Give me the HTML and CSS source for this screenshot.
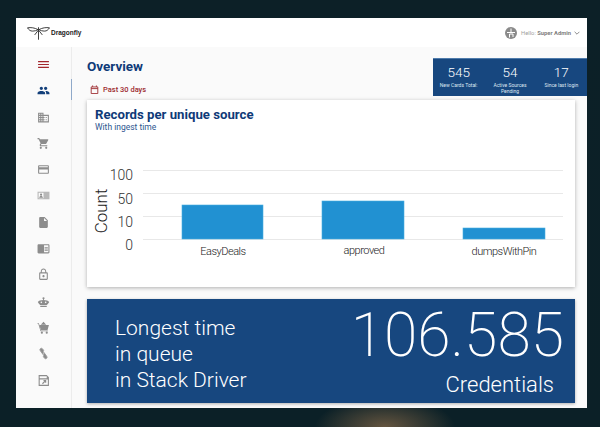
FILE: index.html
```html
<!DOCTYPE html>
<html lang="en">
<head>
  <meta charset="UTF-8" />
  <meta name="viewport" content="width=device-width, initial-scale=1.0"/>
  <title>Dragonfly</title>
  <link rel="stylesheet" href="styles.css">
</head>
<body>
  <div class="window">
    <div class="header">
      <div class="logo">
        <svg class="logo-mark" viewBox="0 0 24 14" fill="none" stroke="#222" stroke-width="0.9">
          <path d="M12 1v13"/>
          <path d="M11.500 3.500C8 1.500 4 1 .5 1.600c1.500 2.200 3 3.400 5 3.400 2.400 0 4.600-.6 6-1.500z"/>
          <path d="M12.500 3.500c3.500-2 7.500-2.500 11-1.900-1.500 2.200-3 3.400-5 3.400-2.400 0-4.600-.6-6-1.500z"/>
          <path d="M11.500 4.500 8 9M12.500 4.500 16 9"/>
        </svg>
        <span class="logo-name">Dragonfly</span>
      </div>
      <div class="user">
        <svg class="avatar" viewBox="0 0 24 24">
          <circle cx="12" cy="12" r="12" fill="#8a8a8a"/>
          <path d="M12 3v8M4 11h16M9 21v-7h7v6" fill="none" stroke="#fff" stroke-width="2"/>
        </svg>
        <span class="hello">Hello: <strong>Super Admin</strong></span>
        <svg class="chevron" viewBox="0 0 10 6"><path d="M1 1l4 4 4-4" fill="none" stroke="#777" stroke-width="1.400"/></svg>
      </div>
    </div>

    <div class="content">
      <div class="sidebar">
        <svg class="nav-icon menu" viewBox="0 0 24 24"><path d="M2 18.500h20v-2.200H2v2.200zm0-5.400h20v-2.200H2v2.200zM2 5.500v2.200h20V5.500H2z"/></svg>
        <svg class="nav-icon active" viewBox="0 0 24 24"><path d="M16 11c1.660 0 2.990-1.340 2.990-3S17.660 5 16 5c-1.660 0-3 1.340-3 3s1.340 3 3 3zm-8 0c1.660 0 2.990-1.340 2.990-3S9.660 5 8 5C6.340 5 5 6.340 5 8s1.340 3 3 3zm0 2c-2.330 0-7 1.170-7 3.500V19h14v-2.500c0-2.330-4.670-3.500-7-3.500zm8 0c-.29 0-.62.02-.97.05 1.160.84 1.970 1.970 1.970 3.450V19h6v-2.500c0-2.330-4.670-3.500-7-3.500z"/></svg>
        <svg class="nav-icon" viewBox="0 0 24 24"><path d="M12 7V3H2v18h20V7H12zM6 19H4v-2h2v2zm0-4H4v-2h2v2zm0-4H4V9h2v2zm0-4H4V5h2v2zm4 12H8v-2h2v2zm0-4H8v-2h2v2zm0-4H8V9h2v2zm0-4H8V5h2v2zm10 12h-8v-2h2v-2h-2v-2h2v-2h-2V9h8v10zm-2-8h-2v2h2v-2zm0 4h-2v2h2v-2z"/></svg>
        <svg class="nav-icon" viewBox="0 0 24 24"><path d="M7 18c-1.100 0-1.990.9-1.990 2S5.900 22 7 22s2-.9 2-2-.9-2-2-2zM1 2v2h2l3.600 7.590-1.350 2.450c-.16.28-.25.61-.25.96 0 1.100.9 2 2 2h12v-2H7.420c-.14 0-.25-.11-.25-.25l.03-.12.9-1.630h7.450c.75 0 1.410-.41 1.750-1.030l3.580-6.490c.08-.14.12-.31.12-.48 0-.55-.45-1-1-1H5.210l-.94-2H1zm16 16c-1.100 0-1.990.9-1.990 2s.89 2 1.990 2 2-.9 2-2-.9-2-2-2z"/></svg>
        <svg class="nav-icon" viewBox="0 0 24 24"><path d="M20 4H4c-1.110 0-1.990.89-1.990 2L2 18c0 1.110.89 2 2 2h16c1.110 0 2-.89 2-2V6c0-1.110-.89-2-2-2zm0 14H4v-6h16v6zm0-10H4V6h16v2z"/></svg>
        <svg class="nav-icon" viewBox="0 0 24 24"><path d="M1 5h22v14H1z" opacity=".6"/><path d="M3 7h9v10H3z" fill="#fafafa"/><circle cx="7.500" cy="10.500" r="2"/><path d="M4 16c0-2 2-3 3.500-3s3.500 1 3.500 3z"/></svg>
        <svg class="nav-icon" viewBox="0 0 24 24"><path d="M6 2c-1.100 0-1.990.9-1.990 2L4 20c0 1.100.89 2 1.990 2H18c1.100 0 2-.9 2-2V8l-6-6H6zm7 7V3.500L18.500 9H13z"/></svg>
        <svg class="nav-icon" viewBox="0 0 24 24"><path d="M21 4H3c-1.100 0-2 .9-2 2v13c0 1.100.9 2 2 2h18c1.100 0 2-.9 2-2V6c0-1.100-.9-2-2-2zm0 15h-8V6h8v13zm-7-9.500h6V11h-6zm0 2.500h6v1.500h-6zm0 2.500h6V16h-6z"/></svg>
        <svg class="nav-icon" viewBox="0 0 24 24"><path d="M12 17c1.100 0 2-.9 2-2s-.9-2-2-2-2 .9-2 2 .9 2 2 2zm6-9h-1V6c0-2.760-2.240-5-5-5S7 3.240 7 6v2H6c-1.100 0-2 .9-2 2v10c0 1.100.9 2 2 2h12c1.100 0 2-.9 2-2V10c0-1.100-.9-2-2-2zM8.900 6c0-1.710 1.390-3.100 3.100-3.100s3.100 1.390 3.100 3.100v2H8.900V6zM18 20H6V10h12v10z"/></svg>
        <svg class="nav-icon" viewBox="0 0 24 24"><path d="M12 9c-5 0-9.500 1.500-10.500 4 1 3 4 5 5 6h11c1-1 4-3 5-6-1-2.500-5.500-4-10.500-4zM6 20.500h12V22H6z"/><path d="M10 6a2 2 0 1 0 4 0 2 2 0 1 0-4 0z"/><path d="M11.200 7.500h1.600V9.500h-1.600z"/><circle cx="8" cy="13.500" r="1.500" fill="#fafafa"/><circle cx="16" cy="13.500" r="1.500" fill="#fafafa"/></svg>
        <svg class="nav-icon" viewBox="0 0 24 24"><path d="M12 1.500 7 7h10zM4 7.500h18l-2.500 9H7.500z"/><path d="M1 4h2.500l4 13.500H20v1.500H6.500L2.500 5.500H1z"/><circle cx="9" cy="21.500" r="2"/><circle cx="18" cy="21.500" r="2"/></svg>
        <svg class="nav-icon" viewBox="0 0 24 24" fill="none" stroke="#9c9c9c" stroke-width="1.800"><path d="M12.500 6.500 10 3.300a2.600 2.600 0 0 0-4.200 3l5.600 8"/><path d="M11.500 17.500l2.500 3.200a2.600 2.600 0 0 0 4.200-3l-5.600-8"/></svg>
        <svg class="nav-icon" viewBox="0 0 24 24"><path d="M3 2h15l4 4v16H3zM5 4v4h13V4zM5 10v10h15V10z" fill-rule="evenodd"/><path d="M10 18l6-6M12 12h4v4" fill="none" stroke="#8c8c8c" stroke-width="2"/></svg>
      </div>

      <div class="main">
        <div class="top-row">
          <div class="title-block">
            <h1>Overview</h1>
            <div class="period">
              <svg class="calendar" viewBox="0 0 12 12" fill="none" stroke="#9d2b30" stroke-width="1.200"><path d="M1.600 2.600h8.800v8.800H1.600zM1.600 4.800h8.800M3.500.6v2M8.500.6v2"/></svg>
              Past 30 days
            </div>
          </div>
          <div class="stats">
            <div class="stat"><span class="stat-value">545</span><span class="stat-label">New Cards Total:</span></div>
            <div class="stat"><span class="stat-value">54</span><span class="stat-label">Active Sources Pending</span></div>
            <div class="stat"><span class="stat-value">17</span><span class="stat-label">Since last login</span></div>
          </div>
        </div>

        <div class="card">
          <h2>Records per unique source</h2>
          <div class="subtitle">With ingest time</div>
          <svg class="chart" viewBox="0 0 488 140">
            <g class="grid">
              <path d="M56 28.500h420M56 51.500h420M56 74.500h420M56 97.500h420"/>
            </g>
            <g class="bars">
              <rect x="95" y="63" width="81" height="34"/>
              <rect x="235" y="59" width="82" height="38"/>
              <rect x="376" y="86" width="82" height="11"/>
            </g>
            <g class="ticks">
              <text x="46" y="38">100</text>
              <text x="46" y="61.500">50</text>
              <text x="46" y="84.500">10</text>
              <text x="46" y="107.500">0</text>
            </g>
            <text class="axis-title" transform="translate(20 69) rotate(-90)">Count</text>
            <g class="labels">
              <text x="136" y="112.500">EasyDeals</text>
              <text x="277" y="111.500">approved</text>
              <text x="417" y="112.500">dumpsWithPin</text>
            </g>
          </svg>
        </div>

        <div class="banner">
          <div class="banner-title">Longest time<br>in queue<br>in Stack Driver</div>
          <div class="banner-figure">
            <div class="banner-number">106.585</div>
            <div class="banner-unit">Credentials</div>
          </div>
        </div>
      </div>
    </div>
  </div>
</body>
</html>
```

FILE: styles.css
```css
* {
  box-sizing: border-box;
}

html, body {
  height: 100%;
}

body {
  margin: 0;
  overflow: hidden;
  font-family: Roboto, 'Liberation Sans', sans-serif;
  background:
    radial-gradient(ellipse 70px 30px at 385px 427px, #65553f, rgba(101,85,63,0) 100%),
    linear-gradient(to bottom, #0c2027, #0b2027);
  padding: 18px 13px 19px 16px;
}

.window {
  height: 100%;
  display: flex;
  flex-direction: column;
  background-color: #fafafa;
}

.header {
  height: 29px;
  flex-shrink: 0;
  background-color: white;
  display: flex;
  align-items: center;
  justify-content: space-between;
  padding: 0 7px 0 11px;
}

.logo {
  display: flex;
  align-items: center;
  gap: 1px;
}

.logo-mark {
  width: 23px;
  height: 14px;
}

.logo-name {
  font-family: 'Liberation Sans', sans-serif;
  font-size: 6.500px;
  font-weight: bold;
  color: #222;
}

.user {
  display: flex;
  align-items: center;
}

.avatar {
  width: 12px;
  height: 12px;
  margin-right: 4px;
}

.hello {
  font-size: 5.800px;
  color: #a0a0a0;
  margin-right: 3px;
}

.hello strong {
  color: #808080;
}

.chevron {
  width: 6px;
  height: 4px;
}

.content {
  flex: 1;
  display: flex;
  min-height: 0;
}

.sidebar {
  width: 56px;
  flex-shrink: 0;
  border-right: 1px solid #ececec;
  display: flex;
  flex-direction: column;
  align-items: center;
  padding-top: 11px;
  gap: 13.300px;
}

.nav-icon {
  width: 13px;
  height: 13px;
  fill: #8c8c8c;
}

.menu {
  fill: #a3262c;
}

.active {
  fill: #123f7a;
}

.main {
  flex: 1;
  display: flex;
  flex-direction: column;
  min-width: 0;
  padding-top: 11px;
}

.top-row {
  height: 38px;
  flex-shrink: 0;
  display: flex;
  justify-content: space-between;
  position: relative;
}

.top-row::before {
  content: "";
  position: absolute;
  left: -1px;
  top: 21px;
  height: 21px;
  width: 1px;
  background-color: #8fa9c9;
}

.title-block {
  padding-left: 15px;
}

h1 {
  margin: 0;
  font-size: 13.500px;
  line-height: 16px;
  font-weight: bold;
  color: #0f3a78;
}

.period {
  margin-top: 11px;
  display: flex;
  align-items: center;
  gap: 4px;
  font-size: 7.500px;
  font-weight: 500;
  color: #9d2b30;
  padding-left: 3px;
}

.calendar {
  width: 9px;
  height: 9px;
}

.stats {
  width: 154px;
  background-color: #17477f;
  color: white;
  display: flex;
  padding-top: 6px;
  border-top: 1px solid #4f7bab;
}

.stat {
  flex: 1;
  display: flex;
  flex-direction: column;
  align-items: center;
  text-align: center;
  padding: 0 4px;
}

.stat-value {
  font-size: 13.500px;
  line-height: 15px;
  font-weight: 300;
}

.stat-label {
  font-size: 5px;
  line-height: 6px;
  margin-top: 2px;
  color: #dfe8f2;
}

.card {
  margin: 4px 12px 0 15px;
  height: 187px;
  flex-shrink: 0;
  background-color: white;
  box-shadow: 0 1px 4px rgba(0,0,0,0.3);
  padding-top: 7px;
}

.card h2 {
  margin: 0 0 0 8px;
  font-size: 13.200px;
  line-height: 15px;
  color: #0f3a78;
}

.subtitle {
  margin-left: 8px;
  font-size: 8.500px;
  line-height: 10px;
  color: #2d5590;
}

.chart {
  display: block;
  width: 488px;
  height: 140px;
  margin-top: 10px;
}

.grid path {
  stroke: #e8e8e8;
  stroke-width: 1;
  fill: none;
}

.bars rect {
  fill: #2191d2;
  stroke: #48afe0;
  stroke-width: 0.600;
}

.ticks text {
  font-size: 14px;
  font-weight: 300;
  fill: #333;
  text-anchor: end;
}

.axis-title {
  font-size: 17px;
  font-weight: 300;
  fill: #222;
  text-anchor: middle;
}

.labels text {
  font-size: 11px;
  font-weight: 300;
  fill: #222;
  text-anchor: middle;
  letter-spacing: -0.5px;
}

.banner {
  margin: 12px 12px 0 15px;
  height: 104px;
  flex-shrink: 0;
  background-color: #17477f;
  color: white;
  box-shadow: 0 1px 3px rgba(0,0,0,0.3);
  display: flex;
  justify-content: space-between;
  padding: 0 11px 0 28px;
}

.banner-title {
  font-size: 21px;
  line-height: 26px;
  font-weight: 300;
  padding-top: 16px;
}

.banner-figure {
  text-align: right;
}

.banner-number {
  font-size: 60.500px;
  line-height: 74px;
  font-weight: 200;
}

.banner-unit {
  font-size: 22px;
  line-height: 24px;
  font-weight: 300;
  padding-right: 10px;
}
```
